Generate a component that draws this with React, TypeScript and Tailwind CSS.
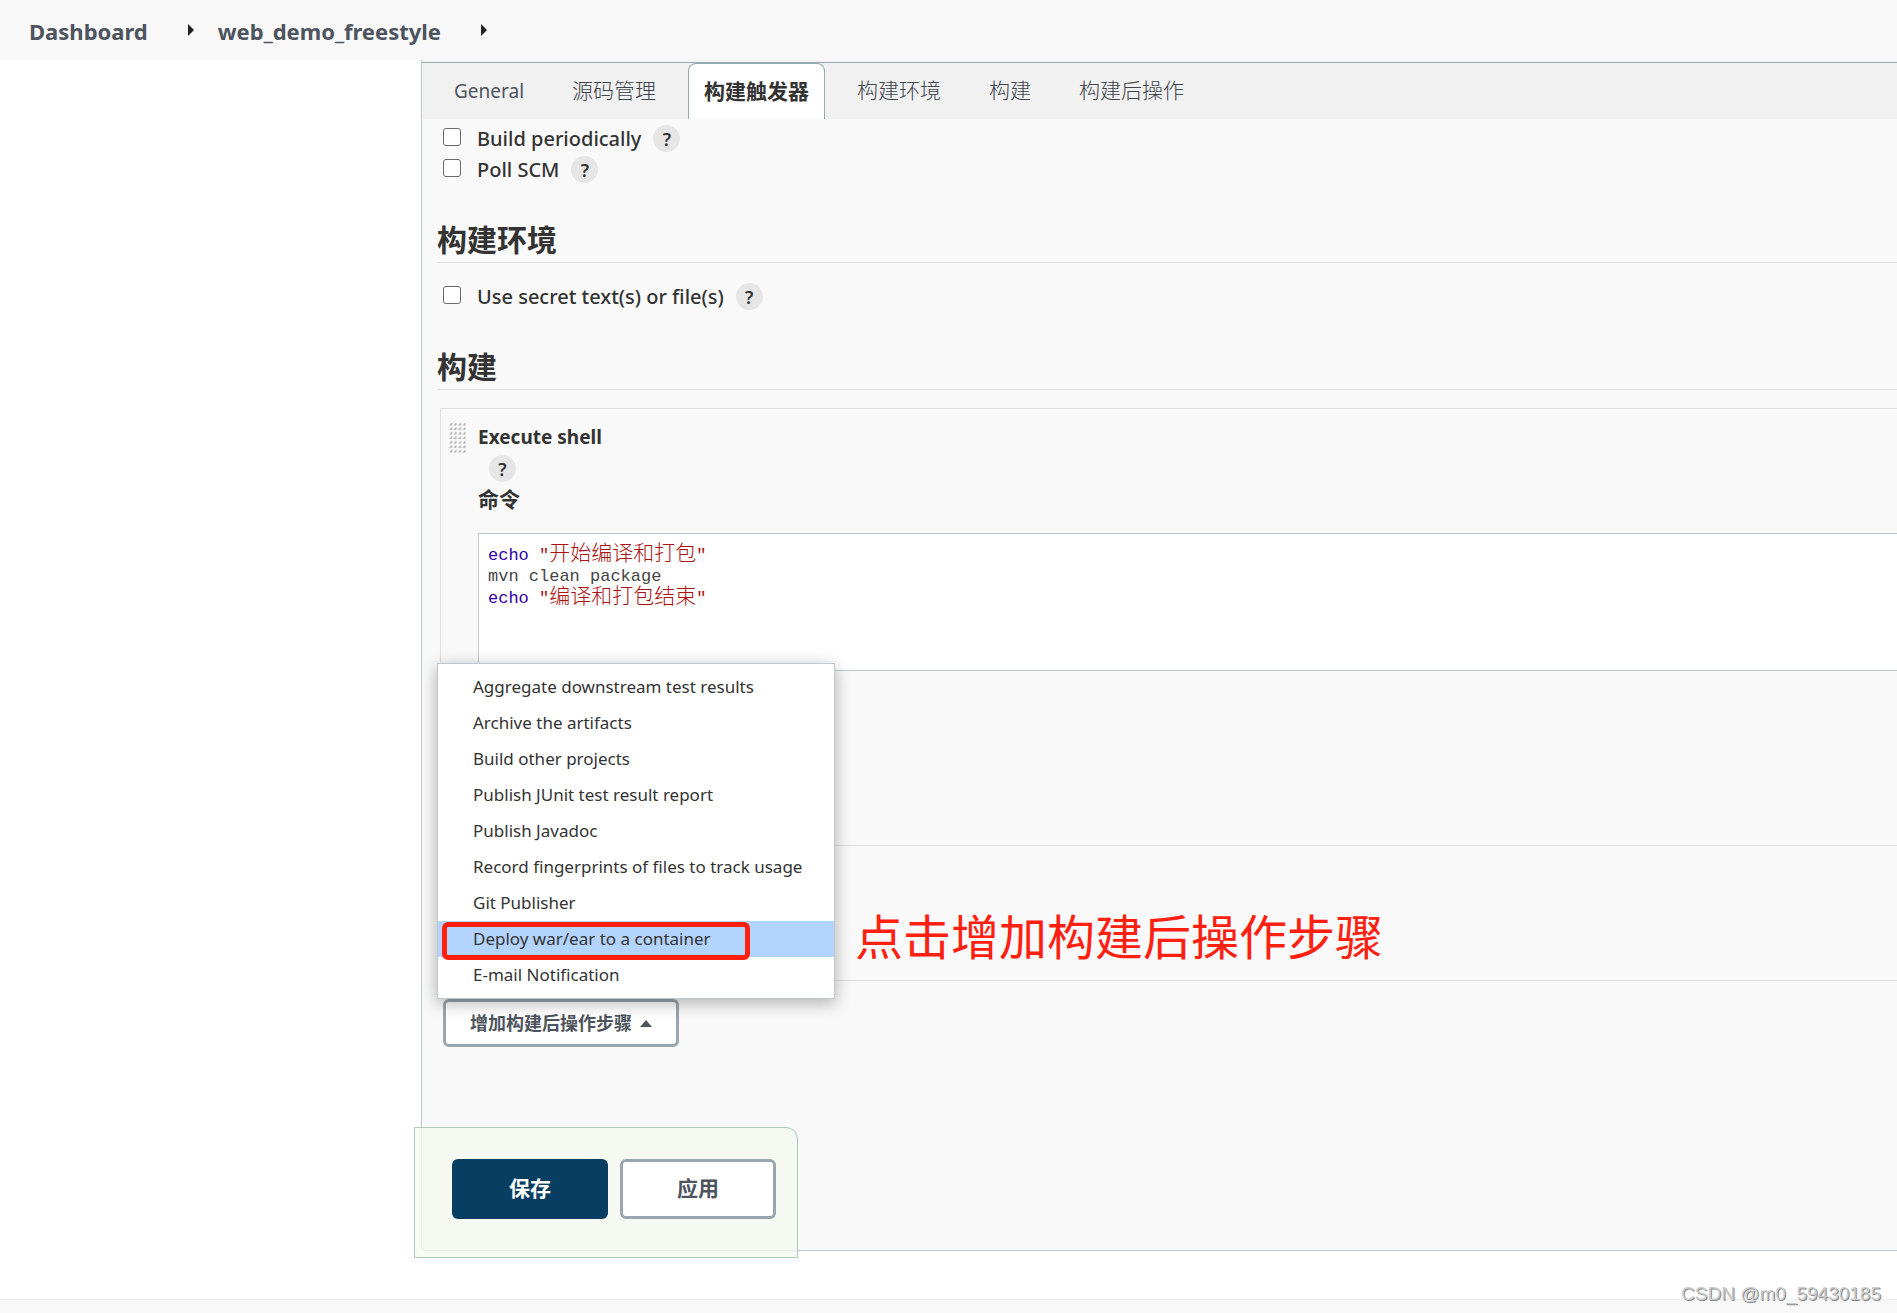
import { useState } from "react";
import type { ReactNode } from "react";

const tabs = ["General", "源码管理", "构建触发器", "构建环境", "构建", "构建后操作"];

const menuItems = [
    "Aggregate downstream test results",
    "Archive the artifacts",
    "Build other projects",
    "Publish JUnit test result report",
    "Publish Javadoc",
    "Record fingerprints of files to track usage",
    "Git Publisher",
    "Deploy war/ear to a container",
    "E-mail Notification",
];

const Arrow = () => (
    <svg className="w-[6px] h-3 text-[#222]" viewBox="0 0 6 12" fill="currentColor">
        <path d="M0 0l6 6-6 6z" />
    </svg>
);

const Help = () => (
    <button
        type="button"
        aria-label="Help"
        className="flex items-center justify-center w-[27px] h-[27px] rounded-full bg-[#e6e6e6] text-[18px] leading-6 font-semibold text-[#333]"
    >
        ?
    </button>
);

const Option = ({ id, label }: { id: string; label: string }) => {
    const [checked, setChecked] = useState(false);

    return (
        <div className="flex items-center h-[31px] pl-[6px]">
            <input
                id={id}
                type="checkbox"
                checked={checked}
                onChange={(e) => setChecked(e.target.checked)}
                className="appearance-none w-[18px] h-[18px] mb-1 mr-4 rounded-[3px] border border-[#6b6b6b] bg-white checked:bg-[#0b6aa2]"
            />
            <label htmlFor={id} className="mr-3 text-[20px] leading-[31px] font-medium">
                {label}
            </label>
            <Help />
        </div>
    );
};

const Heading = ({ children }: { children?: ReactNode }) => (
    <h2 className="h-[42px] border-b border-[#dfdfdf] text-[30px] leading-[38px] font-bold">
        {children}
    </h2>
);

const Grip = () => (
    <svg className="w-[17px] h-8" viewBox="0 0 17 32">
        <defs>
            <pattern id="grip" width="4.5" height="4.5" patternUnits="userSpaceOnUse">
                <path d="M0 3.4L3 0.4V3.4z" fill="#a6a6a2" />
            </pattern>
        </defs>
        <rect width="17" height="32" fill="url(#grip)" />
    </svg>
);

const Breadcrumbs = () => (
    <header className="flex items-center h-[60px] pl-[29px] bg-[#f8f8f8] text-[22px] leading-8 font-bold text-[#4d545d]">
        <a href="#dashboard" className="pt-[2px] mr-10">
            Dashboard
        </a>
        <Arrow />
        <a href="#project" className="pt-[2px] ml-6 mr-10">
            web_demo_freestyle
        </a>
        <Arrow />
    </header>
);

const Tabs = () => {
    const [active, setActive] = useState("构建触发器");

    return (
        <div className="pt-[2px] bg-[#f5f5f5]">
            <div className="flex gap-4 h-[57px] pl-4 border-t border-[#98a9ae] bg-[#f1f1f1]" role="tablist">
                {tabs.map((tab) => (
                    <button
                        key={tab}
                        type="button"
                        role="tab"
                        aria-selected={tab === active}
                        onClick={() => setActive(tab)}
                        className={
                            tab === active
                                ? "px-[15px] rounded-t-lg border border-b-0 border-[#98a9b0] bg-white text-[21px] font-bold text-[#333]"
                                : tab === "General"
                                  ? "px-4 text-[19px] text-[#4d545d]"
                                  : "px-4 text-[21px] font-light text-[#3d444d]"
                        }
                    >
                        {tab}
                    </button>
                ))}
            </div>
        </div>
    );
};

const ShellStep = () => (
    <div className="flex gap-3 ml-[3px] mt-[18px] pt-[13px] pl-2 pb-[174px] border-l border-y border-[#dfdfdf]">
        <Grip />
        <div className="grow">
            <div className="text-[19px] leading-[31px] font-bold">Execute shell</div>
            <div className="flex items-center h-[31px] pl-[11px]">
                <Help />
            </div>
            <div id="command-label" className="text-[21px] leading-[31px] font-bold">
                命令
            </div>
            <div
                role="textbox"
                aria-multiline="true"
                aria-labelledby="command-label"
                contentEditable
                suppressContentEditableWarning
                className="h-[138px] mt-[18px] pt-[10px] pl-[9px] border border-r-0 border-[#bfc9cf] bg-white font-['Liberation_Mono','Noto_Sans_CJK_SC',monospace] text-[17px] leading-[21px] text-[#444] outline-none"
            >
                <div>
                    <span className="text-[#3300aa]">echo</span>{" "}
                    <span className="text-[#aa1111]">
                        "<span className="text-[21px] font-light">开始编译和打包</span>"
                    </span>
                </div>
                <div>mvn clean package</div>
                <div>
                    <span className="text-[#3300aa]">echo</span>{" "}
                    <span className="text-[#aa1111]">
                        "<span className="text-[21px] font-light">编译和打包结束</span>"
                    </span>
                </div>
            </div>
        </div>
    </div>
);

const PostBuildMenu = () => (
    <ul
        role="menu"
        className="absolute bottom-full -left-[6px] w-[398px] py-[5px] border border-[#bfc9cf] bg-white shadow-[0_4px_16px_rgba(0,0,0,0.3)]"
    >
        {menuItems.map((item) => (
            <li key={item} role="none" className="relative">
                <button
                    type="button"
                    role="menuitem"
                    className={
                        item === "Deploy war/ear to a container"
                            ? "block w-full h-9 pl-[35px] bg-[#b3d4ff] text-left text-[17px] text-[#333]"
                            : "block w-full h-9 pl-[35px] text-left text-[17px] text-[#333]"
                    }
                >
                    {item}
                </button>
                {item === "Deploy war/ear to a container" && (
                    <span className="absolute left-1 top-px z-10 w-[308px] h-[38px] rounded-md border-[5px] border-[#ff2010] pointer-events-none" />
                )}
            </li>
        ))}
    </ul>
);

const PostBuild = () => (
    <section className="mt-[93px]" aria-label="构建后操作">
        <Heading />
        <div className="relative w-[236px] ml-[6px] mt-[18px]">
            <button
                type="button"
                aria-haspopup="menu"
                className="flex items-center justify-center gap-2 w-full h-12 rounded-md border-[3px] border-[#9aa6af] bg-white text-[18px] font-bold text-[#4d545d]"
            >
                增加构建后操作步骤
                <svg className="w-3 h-[7px]" viewBox="0 0 12 7" fill="currentColor">
                    <path d="M0 7l6-7 6 7z" />
                </svg>
            </button>
            <PostBuildMenu />
            <p className="absolute bottom-[86px] left-[412px] text-5xl leading-[48px] whitespace-nowrap text-[#ff2010]">
                点击增加构建后操作步骤
            </p>
        </div>
    </section>
);

const App = () => {
    return (
        <div className="relative flex flex-col min-h-screen bg-white font-['Noto_Sans','Noto_Sans_CJK_SC',sans-serif] text-[#333]">
            <Breadcrumbs />
            <div className="flex pb-12">
                <aside className="w-[421px] shrink-0" />
                <main className="grow min-w-0 border-l border-b border-[#bfc9cf] rounded-bl bg-[#f9f9f9]">
                    <Tabs />
                    <div className="pt-1 pl-[15px]">
                        <Option id="periodic" label="Build periodically" />
                        <Option id="poll" label="Poll SCM" />
                        <div className="mt-9 mb-[18px]">
                            <Heading>构建环境</Heading>
                        </div>
                        <Option id="secret" label="Use secret text(s) or file(s)" />
                        <div className="mt-9">
                            <Heading>构建</Heading>
                        </div>
                        <ShellStep />
                        <PostBuild />
                    </div>
                    <div className="relative flex gap-3 w-[384px] h-[131px] mt-20 -ml-2 -mb-2 pt-[31px] pl-[37px] border border-[#a9ccbb] rounded-tr-xl bg-[#f5f9f0]/80 text-[21px] font-bold">
                        <button type="button" className="w-[156px] h-[60px] rounded-md bg-[#083e61] text-white">
                            保存
                        </button>
                        <button
                            type="button"
                            className="w-[156px] h-[60px] rounded-md border-[3px] border-[#9aa6af] bg-white text-[#4d545d]"
                        >
                            应用
                        </button>
                    </div>
                </main>
            </div>
            <footer className="grow border-t border-[#eee] bg-[#f8f8f8]" />
            <div className="absolute right-4 bottom-[7px] font-['Liberation_Sans',sans-serif] text-[19px] leading-6 text-[#ccc] [text-shadow:1px_1px_0_#888]">
                CSDN @m0_59430185
            </div>
        </div>
    );
};

export default App;
